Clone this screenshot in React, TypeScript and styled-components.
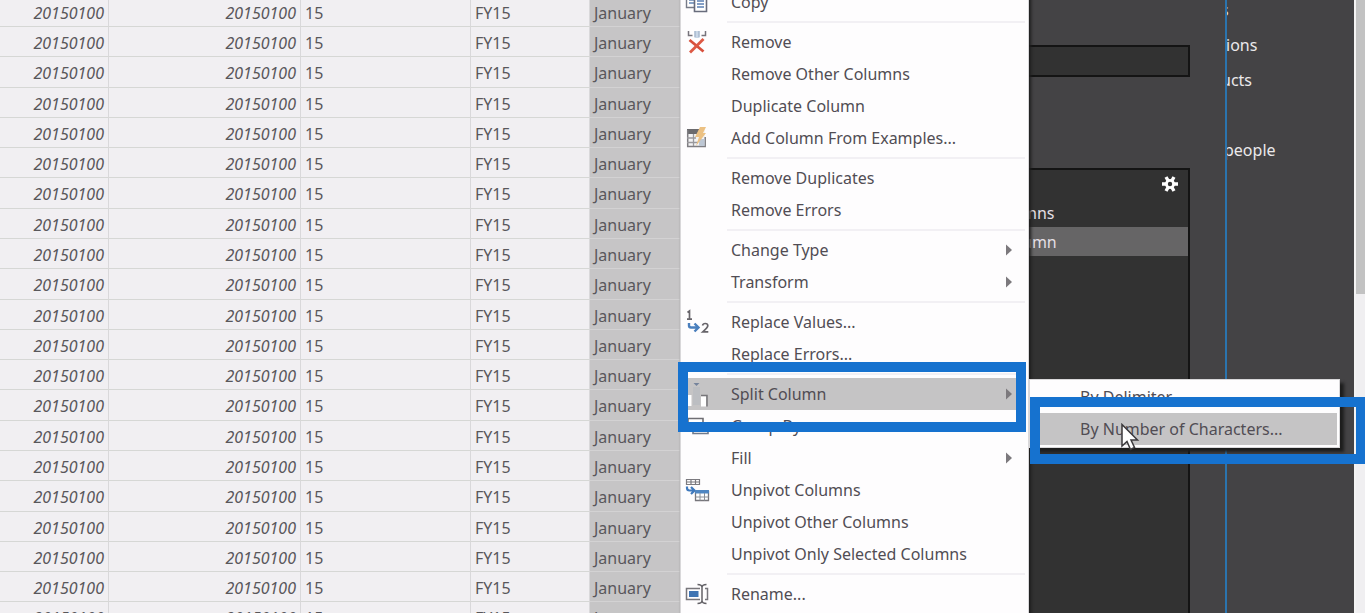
import React from 'react';
import styled, { createGlobalStyle } from 'styled-components';

const GlobalStyle = createGlobalStyle`
  *, *::before, *::after { box-sizing: border-box; }
  body {
    margin: 0;
    overflow: hidden;
    background: #444345;
    font-family: "Noto Sans", "Open Sans", sans-serif;
    font-size: 16px;
  }
`;

const Screen = styled.div`
  position: relative;
  display: flex;
  height: 100vh;
  overflow: hidden;
`;

const DataPane = styled.main`
  flex: 0 0 680px;
  overflow: hidden;
  background: #f1eff2;
`;

const DataTable = styled.table`
  width: 100%;
  margin-top: -3px;
  table-layout: fixed;
  border-collapse: separate;
  border-spacing: 0;
  color: #59575b;
`;

const DataRow = styled.tr`
  height: 30px;
  &:nth-child(7n + 3), &:nth-child(7n) { height: 31px; }
`;

const Cell = styled.td<{ $numeric?: boolean; $selected?: boolean }>`
  padding: 2px 4px 0;
  overflow: hidden;
  line-height: 26px;
  white-space: nowrap;
  border-right: 1px solid ${p => (p.$selected ? '#c6c5c6' : '#d9d8da')};
  border-bottom: 1px solid ${p => (p.$selected ? '#d3d2d3' : '#d6d7d5')};
  background: ${p => (p.$selected ? '#c6c5c6' : 'transparent')};
  text-align: ${p => (p.$numeric ? 'right' : 'left')};
  font-style: ${p => (p.$numeric ? 'italic' : 'normal')};
`;

const SettingsPane = styled.aside`
  flex: 1;
  display: flex;
  flex-direction: column;
  gap: 91px;
  padding: 45px 35px 0 20px;
  overflow: hidden;
  background: #444345;
`;

const NameInput = styled.input`
  flex: none;
  width: 100%;
  height: 32px;
  border: 2px solid #141414;
  background: #323232;
  color: #e6e4e6;
`;

const StepsBox = styled.section`
  flex: 1;
  border: 2px solid #141414;
  border-bottom: 0;
  background: #323232;
`;

const StepRow = styled.div<{ $active?: boolean }>`
  display: flex;
  align-items: center;
  height: 29px;
  padding-left: 320px;
  color: #e4dfe4;
  background: ${p => (p.$active ? '#666566' : 'transparent')};
`;

const StepSettings = styled.button`
  display: block;
  width: 18px;
  height: 18px;
  margin: 5px 9px 5px auto;
  padding: 0;
  border: 0;
  background: none;
`;

const FieldsPane = styled.aside`
  flex: 0 0 129px;
  border-left: 2px solid #2b74ae;
  overflow: hidden;
  background: #444345;
`;

const FieldList = styled.ul`
  display: flex;
  flex-direction: column;
  gap: 10px;
  margin: -2px 0 0;
  padding: 0;
  list-style: none;
  color: #ebe9eb;
`;

const Field = styled.li<{ $cut: number }>`
  height: 25px;
  line-height: 24px;
  text-indent: -${p => p.$cut}px;
`;

const ScrollTrack = styled.div`
  flex: 0 0 11px;
  border-left: 2px solid #f3f3f3;
  background: #f0eff1;
`;

const ScrollThumb = styled.div`
  height: 48%;
  background: #c2c2c2;
`;

const Menu = styled.div`
  position: absolute;
  top: -15px;
  left: 680px;
  width: 349px;
  padding: 0 2px 32px;
  border: 1px solid #d9d8da;
  background: #fefdfe;
  box-shadow: 2px 2px 3px #1d1d1d;
`;

const SubMenu = styled(Menu)`
  top: 379px;
  left: 1029px;
  width: 311px;
  padding: 1px 2px 2px;
  box-shadow: 4px 4px 3px #1d1d1d;
`;

const MenuItem = styled.button<{ $active?: boolean }>`
  display: grid;
  grid-template-columns: 48px 1fr 20px;
  align-items: center;
  width: 100%;
  height: 32px;
  padding: 0;
  border: 0;
  background: ${p => (p.$active ? '#c5c4c5' : 'transparent')};
  color: #514d54;
  font: inherit;
  line-height: 24px;
  text-align: left;
  white-space: nowrap;
`;

const Separator = styled.hr`
  height: 2px;
  margin: 3px 1px 3px 44px;
  border: 0;
  background: #f2f0f4;
`;

const IconSlot = styled.span`
  display: flex;
  padding-left: 2px;
`;

const Highlight = styled.div<{ $x: number; $y: number; $w: number; $h: number }>`
  position: absolute;
  left: ${p => p.$x}px;
  top: ${p => p.$y}px;
  width: ${p => p.$w}px;
  height: ${p => p.$h}px;
  border: 10px solid #1672cf;
  pointer-events: none;
`;

const Pointer = styled.svg`
  position: absolute;
  left: 1120px;
  top: 423px;
`;

const Svg = ({ children }: { children: React.ReactNode }) => (
  <svg width="26" height="26" viewBox="0 0 26 26" fill="none" aria-hidden="true">{children}</svg>
);

const icons: Record<string, React.ReactNode> = {
  copy: (
    <Svg>
      <path d="M1.5 3.5h12v15h-12z" fill="#fff" stroke="#777b88" strokeWidth="1.4" />
      <path d="M4 8h6M4 11h6M4 14h6" stroke="#6486b5" strokeWidth="1.3" />
      <path d="M9.500 6.500h8l4 4v12h-12z" fill="#fff" stroke="#686c7c" strokeWidth="1.6" />
      <path d="M12 12h7M12 15h7M12 18h7" stroke="#5c80b4" strokeWidth="1.4" />
    </Svg>
  ),
  remove: (
    <Svg>
      <path d="M3.500 2v4.500h4M20.500 2v4.500h-4" stroke="#77747c" strokeWidth="1.500" />
      <path d="M9.500 2h5v7h-5z" fill="#c9d6e6" />
      <path d="M10 2v6M14 2v6" stroke="#96a9c2" />
      <path d="M4.500 11l14 11.500" stroke="#d8503c" strokeWidth="2.800" />
      <path d="M18.500 10L5 23.500" stroke="#dd5945" strokeWidth="2.800" />
    </Svg>
  ),
  examples: (
    <Svg>
      <path d="M2 5h18v17H2z" fill="#f3f3f4" />
      <path d="M2 4h13v5H2z" fill="#6b6a6d" />
      <path d="M2.700 5v16.500h17.500V12" stroke="#7f7e82" strokeWidth="1.500" />
      <path d="M8.500 9v12M2 13h9M2 17.500h11" stroke="#9a999d" strokeWidth="1.300" />
      <path d="M14 14h5.500v7H14z" fill="#bdc7d4" />
      <path d="M15 2h6l-3 6h3l-10 13 3-9h-4z" fill="#ecc183" />
    </Svg>
  ),
  replace: (
    <Svg>
      <path d="M2.500 3.500L4.500 2v8M2 10.200h5" stroke="#67646a" strokeWidth="1.700" />
      <path d="M4 14v2.500q0 2 2 2h7M9.500 14.500l4 4-4 4" stroke="#4a7fbd" strokeWidth="2.400" />
      <path d="M17.500 16.500q.5-2 2.700-2 2.600 0 2.600 2.300 0 1.700-5 6h5.500" stroke="#67646a" strokeWidth="1.700" />
    </Svg>
  ),
  split: (
    <Svg>
      <path d="M8.500 2h6l-3 3z" fill="#75839c" />
      <path d="M8 6h7v18H8z" fill="#bcbec2" />
      <path d="M2 14h4.500v11H2z" fill="#fff" />
      <path d="M16 14.500h6v11" stroke="#77767a" strokeWidth="1.500" />
      <path d="M16 15.500h5v10h-5z" fill="#fff" />
    </Svg>
  ),
  group: (
    <Svg>
      <path d="M3 5.500h15v12H3z" fill="#fff" stroke="#6f6e73" strokeWidth="1.600" />
      <path d="M8 12.500h15v8H8z" fill="#fff" stroke="#6f7a8b" strokeWidth="1.600" />
    </Svg>
  ),
  unpivot: (
    <Svg>
      <path d="M1.500 2.500h13v5h-13zM6 2.500v5M10.500 2.500v5M1.500 5h13" stroke="#7b7a7f" strokeWidth="1.200" />
      <path d="M2 9.500v1.500q0 2.500 2.500 2.500H9M6 10l3.500 3.500L6 17" stroke="#3f79bd" strokeWidth="2.200" />
      <path d="M10.500 14.500h13v9h-13z" fill="#fff" stroke="#77767b" strokeWidth="1.300" />
      <path d="M10 13h14v3.500H10z" fill="#4f86c2" />
      <path d="M15 16v7.500M19.500 16v7.500M10.500 20h13" stroke="#8a9099" />
    </Svg>
  ),
  rename: (
    <Svg>
      <path d="M15 7.500H1.500v11H15M20 7.500h2.500v11H20" stroke="#77767b" strokeWidth="1.500" />
      <path d="M4 10h9.500v6H4z" fill="#3f74b3" />
      <path d="M12.500 3.500q4.500 0 4.500 3v13q0 3-4.500 3M21.500 3.500q-4.500 0-4.500 3v13q0 3 4.500 3" stroke="#646267" strokeWidth="1.500" />
    </Svg>
  ),
};

const Arrow = () => (
  <svg width="8" height="12" viewBox="0 0 8 12" aria-hidden="true">
    <path d="M0 0.500l6 5.500-6 5.500z" fill="#7c797d" />
  </svg>
);

type Entry = { label: string; icon?: string; more?: boolean; active?: boolean };

const groups: Entry[][] = [
  [{ label: 'Copy', icon: 'copy' }],
  [
    { label: 'Remove', icon: 'remove' },
    { label: 'Remove Other Columns' },
    { label: 'Duplicate Column' },
    { label: 'Add Column From Examples...', icon: 'examples' },
  ],
  [{ label: 'Remove Duplicates' }, { label: 'Remove Errors' }],
  [{ label: 'Change Type', more: true }, { label: 'Transform', more: true }],
  [{ label: 'Replace Values...', icon: 'replace' }, { label: 'Replace Errors...' }],
  [
    { label: 'Split Column', icon: 'split', more: true, active: true },
    { label: 'Group By', icon: 'group' },
    { label: 'Fill', more: true },
    { label: 'Unpivot Columns', icon: 'unpivot' },
    { label: 'Unpivot Other Columns' },
    { label: 'Unpivot Only Selected Columns' },
  ],
  [{ label: 'Rename...', icon: 'rename' }],
];

const submenu: Entry[] = [{ label: 'By Delimiter' }, { label: 'By Number of Characters...', active: true }];

const Item = ({ entry }: { entry: Entry }) => (
  <MenuItem type="button" role="menuitem" $active={entry.active}>
    <IconSlot>{entry.icon && icons[entry.icon]}</IconSlot>
    <span>{entry.label}</span>
    {entry.more && <Arrow />}
  </MenuItem>
);

export default function App() {
  return (
    <>
      <GlobalStyle />
      <Screen>
        <DataPane>
          <DataTable>
            <colgroup>
              <col style={{ width: 109 }} />
              <col style={{ width: 192 }} />
              <col style={{ width: 170 }} />
              <col style={{ width: 119 }} />
              <col />
            </colgroup>
            <tbody>
              {Array.from({ length: 21 }, (_, i) => (
                <DataRow key={i}>
                  <Cell $numeric>20150100</Cell>
                  <Cell $numeric>20150100</Cell>
                  <Cell>15</Cell>
                  <Cell>FY15</Cell>
                  <Cell $selected>January</Cell>
                </DataRow>
              ))}
            </tbody>
          </DataTable>
        </DataPane>
        <SettingsPane>
          <NameInput type="text" aria-label="Name" />
          <StepsBox>
            <StepSettings type="button" aria-label="Settings">
              <svg width="18" height="18" viewBox="0 0 18 18" aria-hidden="true">
                <path d="M1 9h16M5 2l8 14M13 2L5 16" stroke="#fff" strokeWidth="3.400" />
                <circle cx="9" cy="9" r="5" fill="#fff" />
                <circle cx="9" cy="9" r="2.200" fill="#323232" />
              </svg>
            </StepSettings>
            <StepRow>mns</StepRow>
            <StepRow $active>umn</StepRow>
          </StepsBox>
        </SettingsPane>
        <FieldsPane>
          <FieldList>
            <Field $cut={6}>s</Field>
            <Field $cut={1}>ions</Field>
            <Field $cut={6}>ucts</Field>
            <Field $cut={0} />
            <Field $cut={3}>people</Field>
          </FieldList>
        </FieldsPane>
        <ScrollTrack>
          <ScrollThumb />
        </ScrollTrack>

        <Menu role="menu">
          {groups.map((group, i) => (
            <React.Fragment key={i}>
              {i > 0 && <Separator />}
              {group.map(entry => <Item key={entry.label} entry={entry} />)}
            </React.Fragment>
          ))}
        </Menu>
        <SubMenu role="menu">
          {submenu.map(entry => <Item key={entry.label} entry={entry} />)}
        </SubMenu>

        <Highlight $x={678} $y={362} $w={348} $h={70} />
        <Highlight $x={1030} $y={397} $w={336} $h={67} />
        <Pointer width="20" height="30" viewBox="0 0 20 30" aria-hidden="true">
          <path d="M2 1.500v21.500l5-4.500 3.500 8 4-2-3.500-7.500h6.500z" fill="#fff" stroke="#3b393c" strokeWidth="1.500" />
        </Pointer>
      </Screen>
    </>
  );
}
